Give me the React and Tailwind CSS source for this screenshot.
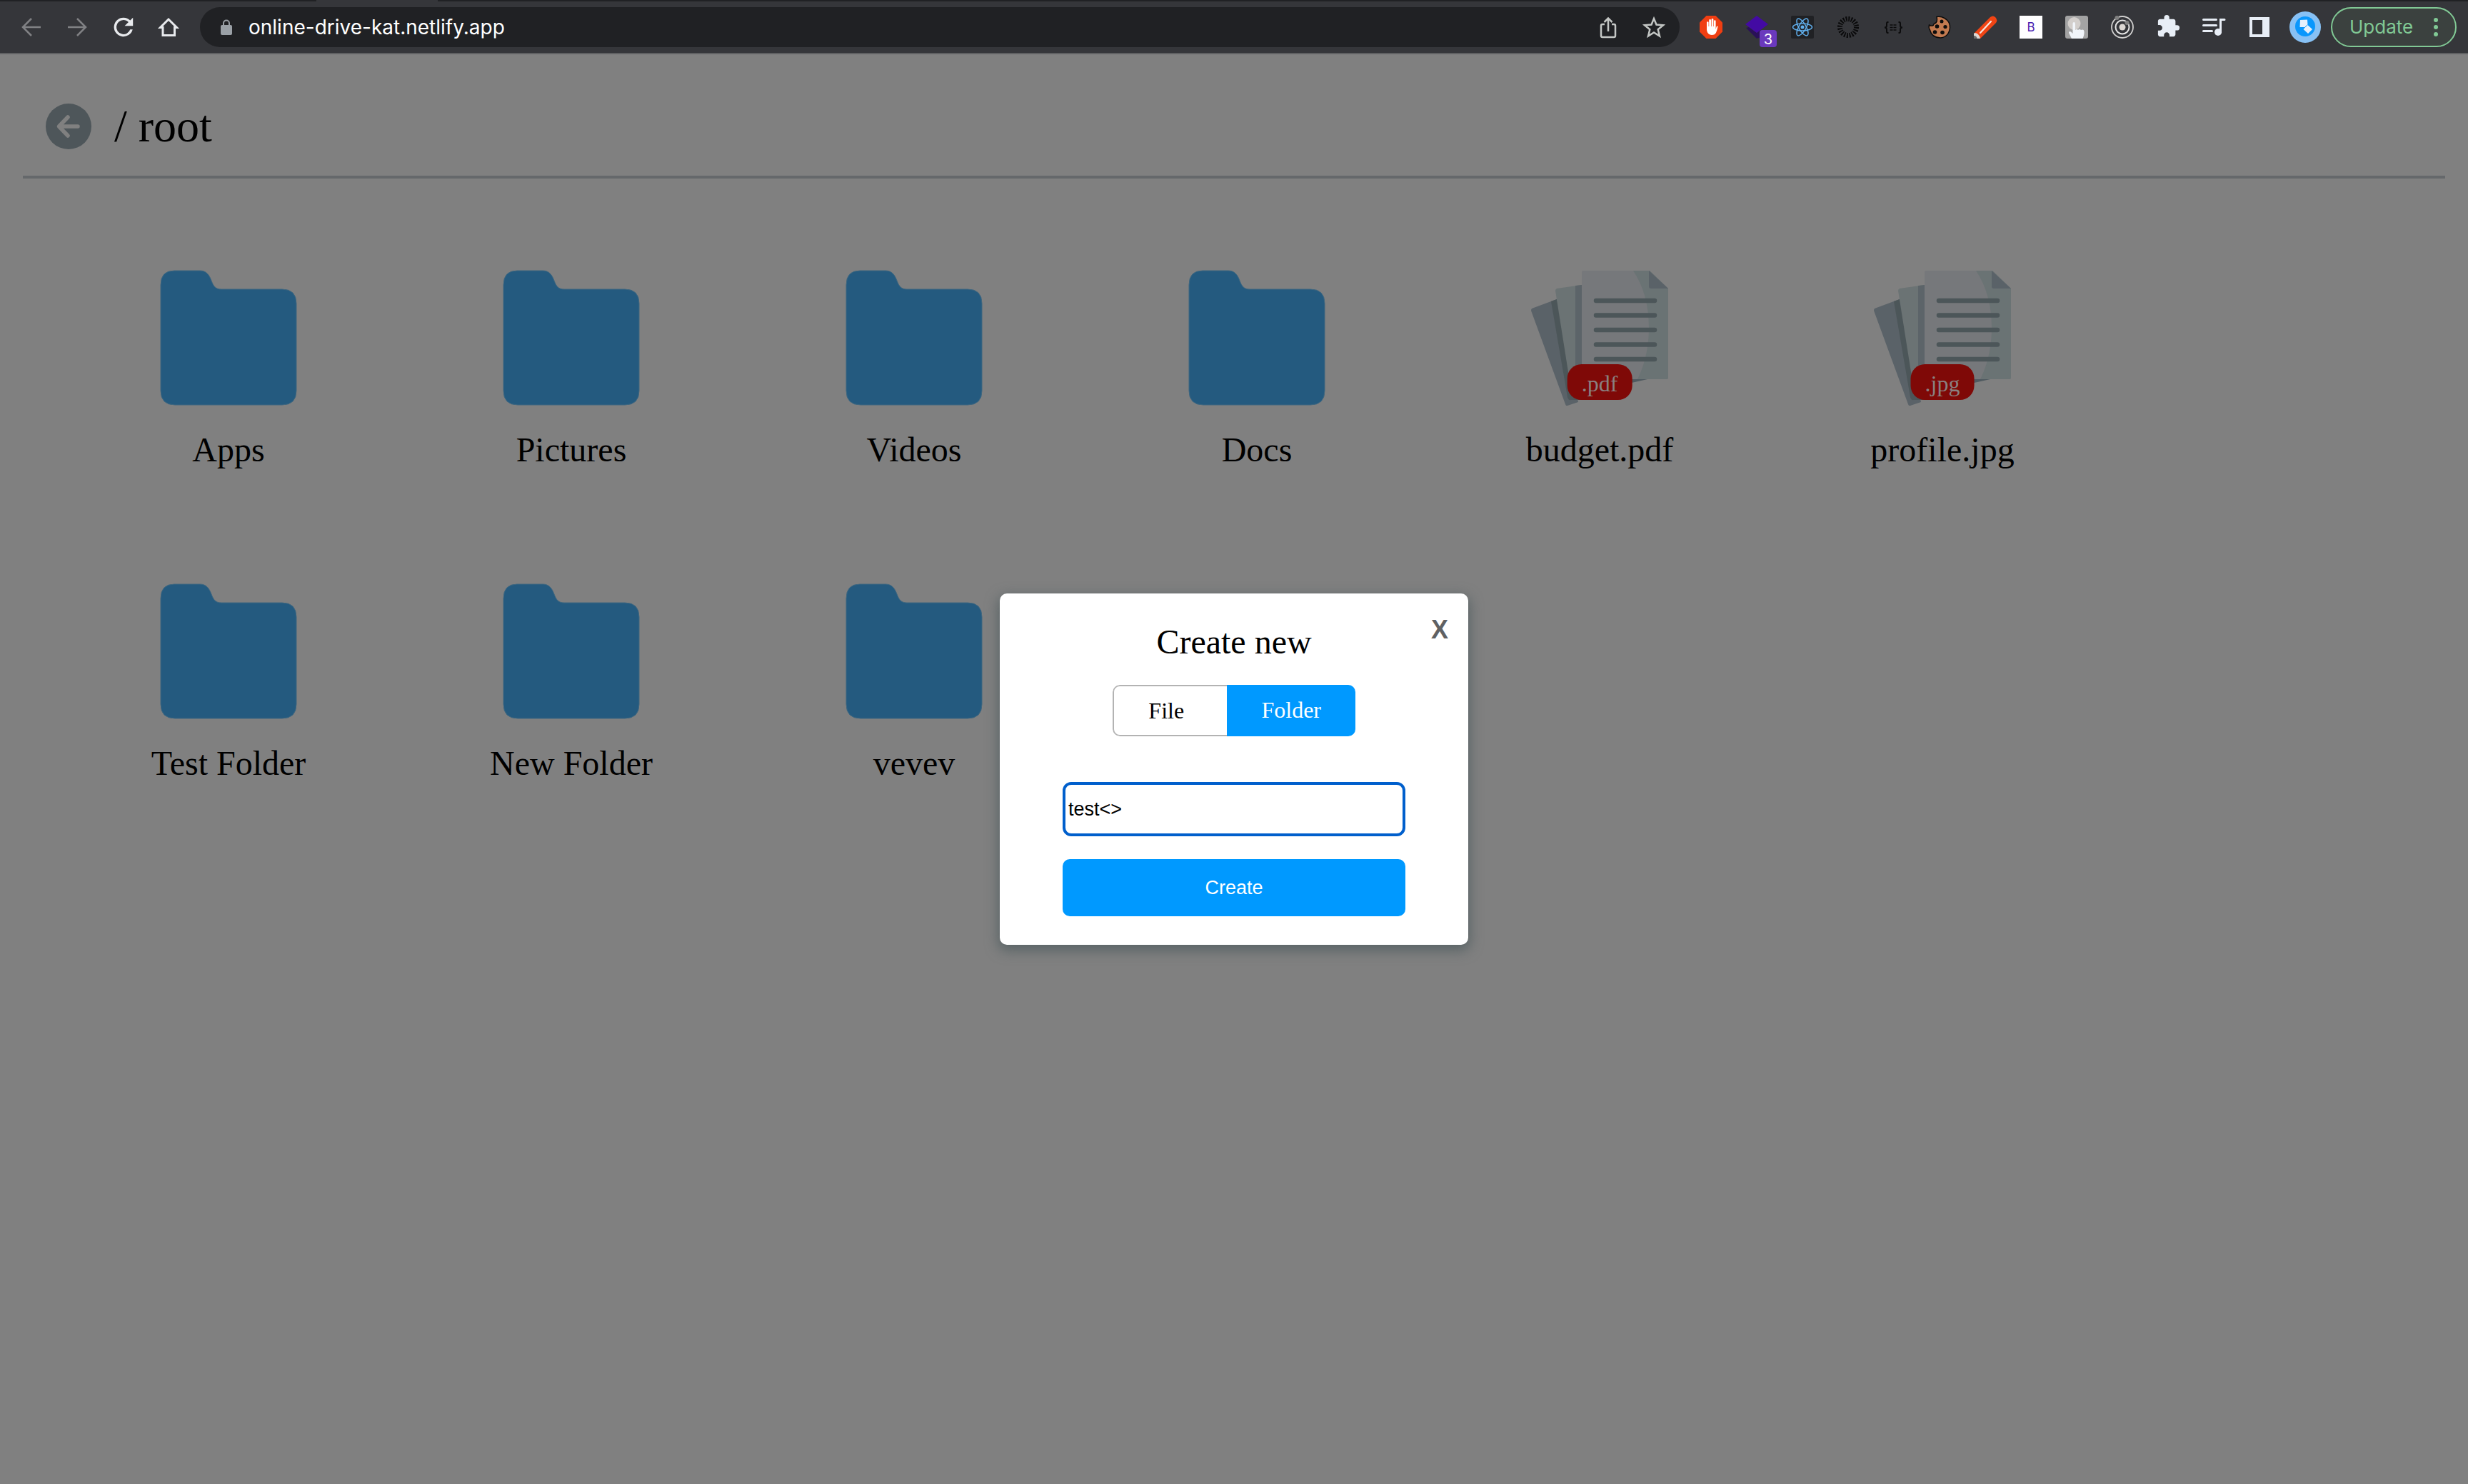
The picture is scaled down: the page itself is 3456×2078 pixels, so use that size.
import React from 'react';

const items = [
  { name: 'Apps' },
  { name: 'Pictures' },
  { name: 'Videos' },
  { name: 'Docs' },
  { name: 'budget.pdf', ext: '.pdf' },
  { name: 'profile.jpg', ext: '.jpg' },
  { name: 'Test Folder' },
  { name: 'New Folder' },
  { name: 'vevev' },
];

function FolderIcon() {
  return (
    <svg viewBox="0 0 192 192" className="size-48" aria-hidden="true">
      <path
        d="M20 3H56C65 3 69 9 72 17C75 25 78 29 86 29H171Q191 29 191 49V171Q191 191 171 191H21Q1 191 1 171V23Q1 3 20 3Z"
        fill="#245a7f"
        stroke="#3f6780"
        strokeWidth="1"
      />
    </svg>
  );
}

function FileIcon() {
  return (
    <svg viewBox="0 0 192 192" className="size-48" aria-hidden="true">
      <path d="M1 56L36 43L66 187L51 192Q49 193 48 190L0 59Q0 57 1 56Z" fill="#5a6268" />
      <path d="M28 46L36 43L76 184L56 184Q52 185 51 180Z" fill="#4c5659" />
      <path d="M36 28L71 23V170H56L34 31Q34 29 36 28Z" fill="#6b7374" />
      <path d="M62 24L71 23V160H62Z" fill="#5c6469" />
      <path d="M136 161L163 155H136Z" fill="#4f5a60" />
      <path d="M73 3H166L192 28V153Q192 155 190 155H73Q71 155 71 153V5Q71 3 73 3Z" fill="#76787b" />
      <path d="M143 3H166L192 28V153Q192 155 190 155H149C160 133 165 108 165 83C165 50 157 24 143 3Z" fill="#6a7374" />
      <path d="M165 3L192 28H168Q165 28 165 25Z" fill="#5a6268" />
      <path d="M91 45H173M91 65.500H173M91 86H173M91 106.500H173M91 127H173" stroke="#4c5659" strokeWidth="6.500" strokeLinecap="round" />
    </svg>
  );
}

function Item({ name, ext }) {
  return (
    <button type="button" className="flex w-[480px] flex-col items-center gap-[34px]">
      <span className="relative">
        {ext ? <FileIcon /> : <FolderIcon />}
        {ext && (
          <span className="absolute bottom-2 left-1/2 -translate-x-1/2 rounded-[20px] bg-[#7f0907] px-5 pt-2 pb-1 text-[32px] leading-[38px] text-[#8a8080]">
            {ext}
          </span>
        )}
      </span>
      <span className="text-[48px] leading-[55px]">{name}</span>
    </button>
  );
}

function Ext({ label, children }) {
  return (
    <button type="button" aria-label={label} className="relative size-8 shrink-0">
      <svg viewBox="0 0 32 32" className="size-8 overflow-visible" aria-hidden="true">
        {children}
      </svg>
    </button>
  );
}

function BrowserBar() {
  return (
    <header className='shrink-0 bg-[#35363a] font-["Inter",sans-serif]'>
      <div className="flex h-0.5">
        <div className="w-[443px] bg-[#202124]" />
        <div className="w-[170px]" />
        <div className="flex-1 bg-[#202124]" />
      </div>
      <div className="flex h-[72px] items-center gap-7 pr-4 pl-7">
        <nav className="flex gap-8">
          <Ext label="Back">
            <path d="M29 16H4M16 4L4 16L16 28" fill="none" stroke="#808184" strokeWidth="2.500" />
          </Ext>
          <Ext label="Forward">
            <path d="M3 16H28M16 4L28 16L16 28" fill="none" stroke="#808184" strokeWidth="2.500" />
          </Ext>
          <Ext label="Reload">
            <path
              transform="translate(-3 -4) scale(1.66)"
              d="M17.650 6.350A7.960 7.960 0 0 0 12 4a8 8 0 1 0 7.730 10h-2.080A6 6 0 1 1 12 6c1.660 0 3.140.690 4.220 1.780L13 11h7V4z"
              fill="#e8eaed"
            />
          </Ext>
          <Ext label="Home">
            <path d="M16 5L4.500 16.500H8V27.500H24.500V16.500H27.500Z" fill="none" stroke="#e8eaed" strokeWidth="3" />
          </Ext>
        </nav>
        <div className="flex h-14 flex-1 items-center gap-[22px] rounded-full bg-[#202124] pr-5 pl-7">
          <svg viewBox="0 0 18 22" className="h-[22px] w-[18px]" aria-hidden="true">
            <path d="M5 9V5.500a4 4 0 0 1 8 0V9" fill="none" stroke="#9aa0a6" strokeWidth="2" />
            <rect x="1" y="8" width="16" height="14" rx="2" fill="#9aa0a6" />
          </svg>
          <input
            type="text"
            aria-label="Address"
            defaultValue="online-drive-kat.netlify.app"
            className="min-w-0 flex-1 bg-transparent text-[28px] leading-8 text-white outline-none"
          />
          <div className="flex gap-8">
            <Ext label="Share">
              <path d="M11 12H8Q6 12 6 14V28Q6 30 8 30H24Q26 30 26 28V14Q26 12 24 12H21M16 22V4M10.500 9L16 3.500L21.500 9" fill="none" stroke="#c4c7c5" strokeWidth="2.500" />
            </Ext>
            <Ext label="Bookmark">
              <path d="M16 4L19.500 12.500L29 13.200L21.700 19.200L24 28.500L16 23.500L8 28.500L10.300 19.200L3 13.200L12.500 12.500Z" fill="none" stroke="#c4c7c5" strokeWidth="2.500" />
            </Ext>
          </div>
        </div>
        <div className="flex gap-8">
          <Ext label="Ad blocker">
            <path d="M9.500 0H22.500L32 9.500V22.500L22.500 32H9.500L0 22.500V9.500Z" fill="#f03e12" />
            <path d="M10 20V9.500a1.300 1.300 0 0 1 2.600 0V15h.6V6.500a1.400 1.400 0 0 1 2.800 0V15h.6V5.500a1.400 1.400 0 0 1 2.800 0V15h.6V7.500a1.300 1.300 0 0 1 2.600 0V19l1-3.500q1-1.500 2-.5q-1 5-2.500 8.500Q21.500 27 17 27Q11 27 10 20Z" fill="#fff" />
          </Ext>
          <button type="button" aria-label="Layers extension, 3 items" className="relative size-8">
            <svg viewBox="0 0 32 32" className="size-8" aria-hidden="true">
              <path d="M1 17L5 16L16 24L22 20V30L16 32Z" fill="#2a1058" />
              <path d="M16 0L32 12L16 24L0 12Z" fill="#430aa3" />
            </svg>
            <span className="absolute top-5 left-5 h-6 w-6 rounded-[4px] bg-[#6a39bd] text-center text-[20px] leading-[26px] text-white">3</span>
          </button>
          <Ext label="React tools">
            <rect width="32" height="32" rx="2" fill="#202124" />
            <g fill="none" stroke="#61b0ee" strokeWidth="1.500">
              <ellipse cx="16" cy="16" rx="13.500" ry="5" />
              <ellipse cx="16" cy="16" rx="13.500" ry="5" transform="rotate(60 16 16)" />
              <ellipse cx="16" cy="16" rx="13.500" ry="5" transform="rotate(120 16 16)" />
            </g>
            <circle cx="16" cy="16" r="2.500" fill="#61b0ee" />
          </Ext>
          <Ext label="Ring">
            <circle cx="16" cy="16" r="11.500" fill="none" stroke="#0a0a0b" strokeWidth="7" strokeDasharray="1.900 1.713" />
          </Ext>
          <Ext label="JSON viewer">
            <g fill="none" stroke="#0c0c0d" strokeWidth="2">
              <path d="M8.500 9H7.500Q6 9 6 11V14Q6 16.500 3 16.500Q6 16.500 6 19V22Q6 24 7.500 24H8.500M22.500 9H23.500Q25 9 25 11V14Q25 16.500 28 16.500Q25 16.500 25 19V22Q25 24 23.500 24H22.500" />
              <path d="M10.500 13H20.500M10.500 16.500H20.500M10.500 20H20.500" strokeDasharray="4 1" strokeWidth="1.500" />
            </g>
          </Ext>
          <Ext label="Cookie editor">
            <path d="M12 1.500Q18 .5 23 3.500Q31 8 30.500 17Q29 30 17 31Q5 30.500 2.500 20Q.5 17 1.500 13Q7 16 8.500 11Q14 10 12 1.500Z" fill="#c27a50" stroke="#0d0d0d" strokeWidth="1.500" />
            <g fill="#0d0d0d">
              <circle cx="19" cy="8" r="2.500" />
              <circle cx="12.500" cy="15" r="2.800" />
              <circle cx="24" cy="15.500" r="2.600" />
              <circle cx="9.500" cy="23" r="2.800" />
              <circle cx="20" cy="23.500" r="2.800" />
            </g>
          </Ext>
          <Ext label="Highlighter">
            <path d="M1 24L23 2Q27-1 30 2Q34 6 31 10L9 32Z" fill="#f04414" />
            <path d="M1 24Q7 24 9 32L0 32V25Z" fill="#ddd8d4" />
            <path d="M0 28Q4 28 4.500 32H0Z" fill="#6b6b6b" />
            <path d="M9 24L24 8" stroke="#f4e6e0" strokeWidth="2.200" strokeLinecap="round" />
          </Ext>
          <button type="button" className="size-8 bg-white text-center text-[17px] leading-8 text-[#4a1fb0]">B</button>
          <Ext label="Click tool">
            <rect width="32" height="32" rx="3" fill="#a3a3a3" />
            <circle cx="12.500" cy="11" r="9" fill="#d3cfcc" />
            <path d="M10.500 11q0-2 1.700-2t1.800 2v9q2-2 4 0q2-2 4 0q4-1.500 4.500 2q.5 4-2 10H9L5 24q0-3 3-1.500l2.500 2.500Z" fill="#f1f5fa" />
          </Ext>
          <Ext label="Target">
            <circle cx="16" cy="16" r="15" fill="none" stroke="#d0cfce" strokeWidth="1.800" />
            <circle cx="16" cy="16" r="9.500" fill="none" stroke="#e4e4e4" strokeWidth="2" />
            <circle cx="16" cy="16" r="4.500" fill="#dcd8d4" />
            <circle cx="8.500" cy="3" r="3" fill="#808080" />
            <circle cx="22.500" cy="10" r="3" fill="#808080" />
          </Ext>
          <Ext label="Extensions">
            <path
              transform="translate(-1 -2.500) scale(1.440)"
              d="M20.500 11H19V7c0-1.100-.9-2-2-2h-4V3.500a2.500 2.500 0 0 0-5 0V5H4c-1.100 0-1.990.9-1.990 2v3.800H3.500c1.490 0 2.700 1.210 2.700 2.700s-1.210 2.700-2.700 2.700H2V20c0 1.100.9 2 2 2h3.800v-1.500c0-1.490 1.210-2.700 2.700-2.700s2.700 1.210 2.700 2.700V22H17c1.100 0 2-.9 2-2v-4h1.500a2.500 2.500 0 0 0 0-5z"
              fill="#e8eef6"
            />
          </Ext>
          <Ext label="Media">
            <path d="M1.500 5.500H19.500M1.500 13.500H19.500M1.500 21.500H13.500" stroke="#e8eef6" strokeWidth="3" strokeLinecap="round" />
            <path d="M25.500 23V5.500H31" fill="none" stroke="#e8eef6" strokeWidth="3" strokeLinecap="round" />
            <circle cx="22" cy="23" r="5" fill="#e8eef6" />
          </Ext>
          <Ext label="Side panel">
            <path d="M2 2H30V30H2ZM6 6V26H20V6Z" fill="#e8eef6" fillRule="evenodd" />
          </Ext>
        </div>
        <div className="-ml-0.5 flex items-center gap-3.5">
          <button type="button" aria-label="Profile">
            <svg viewBox="0 0 44 44" className="size-11" aria-hidden="true">
              <circle cx="22" cy="22" r="22" fill="#87c1f5" />
              <circle cx="22" cy="21" r="14" fill="#0a97fc" />
              <path d="M15 12L25 11.500L25.500 19L32 25L26 31L19.500 25L21 22H14.500Z" fill="#e6f0fc" />
              <path d="M25.500 18.500L19.500 24.500" stroke="#0a97fc" strokeWidth="1" />
            </svg>
          </button>
          <button
            type="button"
            className="flex h-14 w-44 items-center justify-between rounded-full border-2 border-[#81c995] bg-[#3b413f] pr-6 pl-6 text-[26px] leading-8 text-[#81c995]"
          >
            Update
            <svg viewBox="0 0 6 26" className="h-[26px] w-1.5" fill="#81c995" aria-hidden="true">
              <circle cx="3" cy="3" r="3" />
              <circle cx="3" cy="13" r="3" />
              <circle cx="3" cy="23" r="3" />
            </svg>
          </button>
        </div>
      </div>
      <div className="h-0.5 bg-[#606163]" />
    </header>
  );
}

function CreateDialog() {
  return (
    <div
      role="dialog"
      aria-labelledby="dialog-title"
      className="relative flex w-[656px] flex-col items-center rounded-[10px] bg-white py-10 shadow-[0_6px_18px_2px_rgba(75,90,92,0.75)]"
    >
      <button
        type="button"
        aria-label="Close"
        className='absolute top-[30px] right-7 font-["Liberation_Sans",sans-serif] text-[36px] leading-[42px] font-bold text-[#5f6163]'
      >
        X
      </button>
      <h2 id="dialog-title" className="text-[48px] leading-14">Create new</h2>
      <div className="mt-8 flex h-[72px] w-[340px] overflow-hidden rounded-[10px] text-[32px]">
        <button type="button" aria-pressed="false" className="flex-1 rounded-l-[10px] border-2 border-r-0 border-[#b3b3b3] pr-3 leading-9">
          File
        </button>
        <button type="button" aria-pressed="true" className="bg-[#0099ff] px-12 pb-0.5 leading-9 text-white">
          Folder
        </button>
      </div>
      <form className="mt-16 flex w-[480px] flex-col gap-8 font-['Liberation_Sans',sans-serif] text-[27px] leading-8" onSubmit={(e) => e.preventDefault()}>
        <input
          type="text"
          aria-label="Folder name"
          defaultValue="test<>"
          className="h-[76px] rounded-xl border-4 border-[#005fcc] px-1 outline-none"
        />
        <button type="submit" className="h-20 rounded-[10px] bg-[#0099ff] text-white">
          Create
        </button>
      </form>
    </div>
  );
}

export default function App() {
  return (
    <div className="flex min-h-screen flex-col bg-[#808080] text-black">
      <BrowserBar />
      <main className='relative flex-1 px-8 font-["Liberation_Serif",serif]'>
        <div className="flex items-center gap-8 border-b-4 border-[#65686b] pt-[69px] pb-[37px] pl-8">
          <button type="button" aria-label="Go back">
            <svg viewBox="0 0 64 64" className="size-16" aria-hidden="true">
              <circle cx="32" cy="32" r="32" fill="#4e565a" />
              <path d="M45 32H19M31 19L18.500 32L31 45" fill="none" stroke="#808080" strokeWidth="5.500" strokeLinecap="round" strokeLinejoin="round" />
            </svg>
          </button>
          <h1 className="text-[64px] leading-16">/ root</h1>
        </div>
        <div className="flex flex-wrap gap-y-[158px] px-12 pt-[126px]">
          {items.map((item) => (
            <Item key={item.name} {...item} />
          ))}
        </div>
        <div className="absolute inset-0 flex items-center justify-center">
          <CreateDialog />
        </div>
      </main>
    </div>
  );
}
